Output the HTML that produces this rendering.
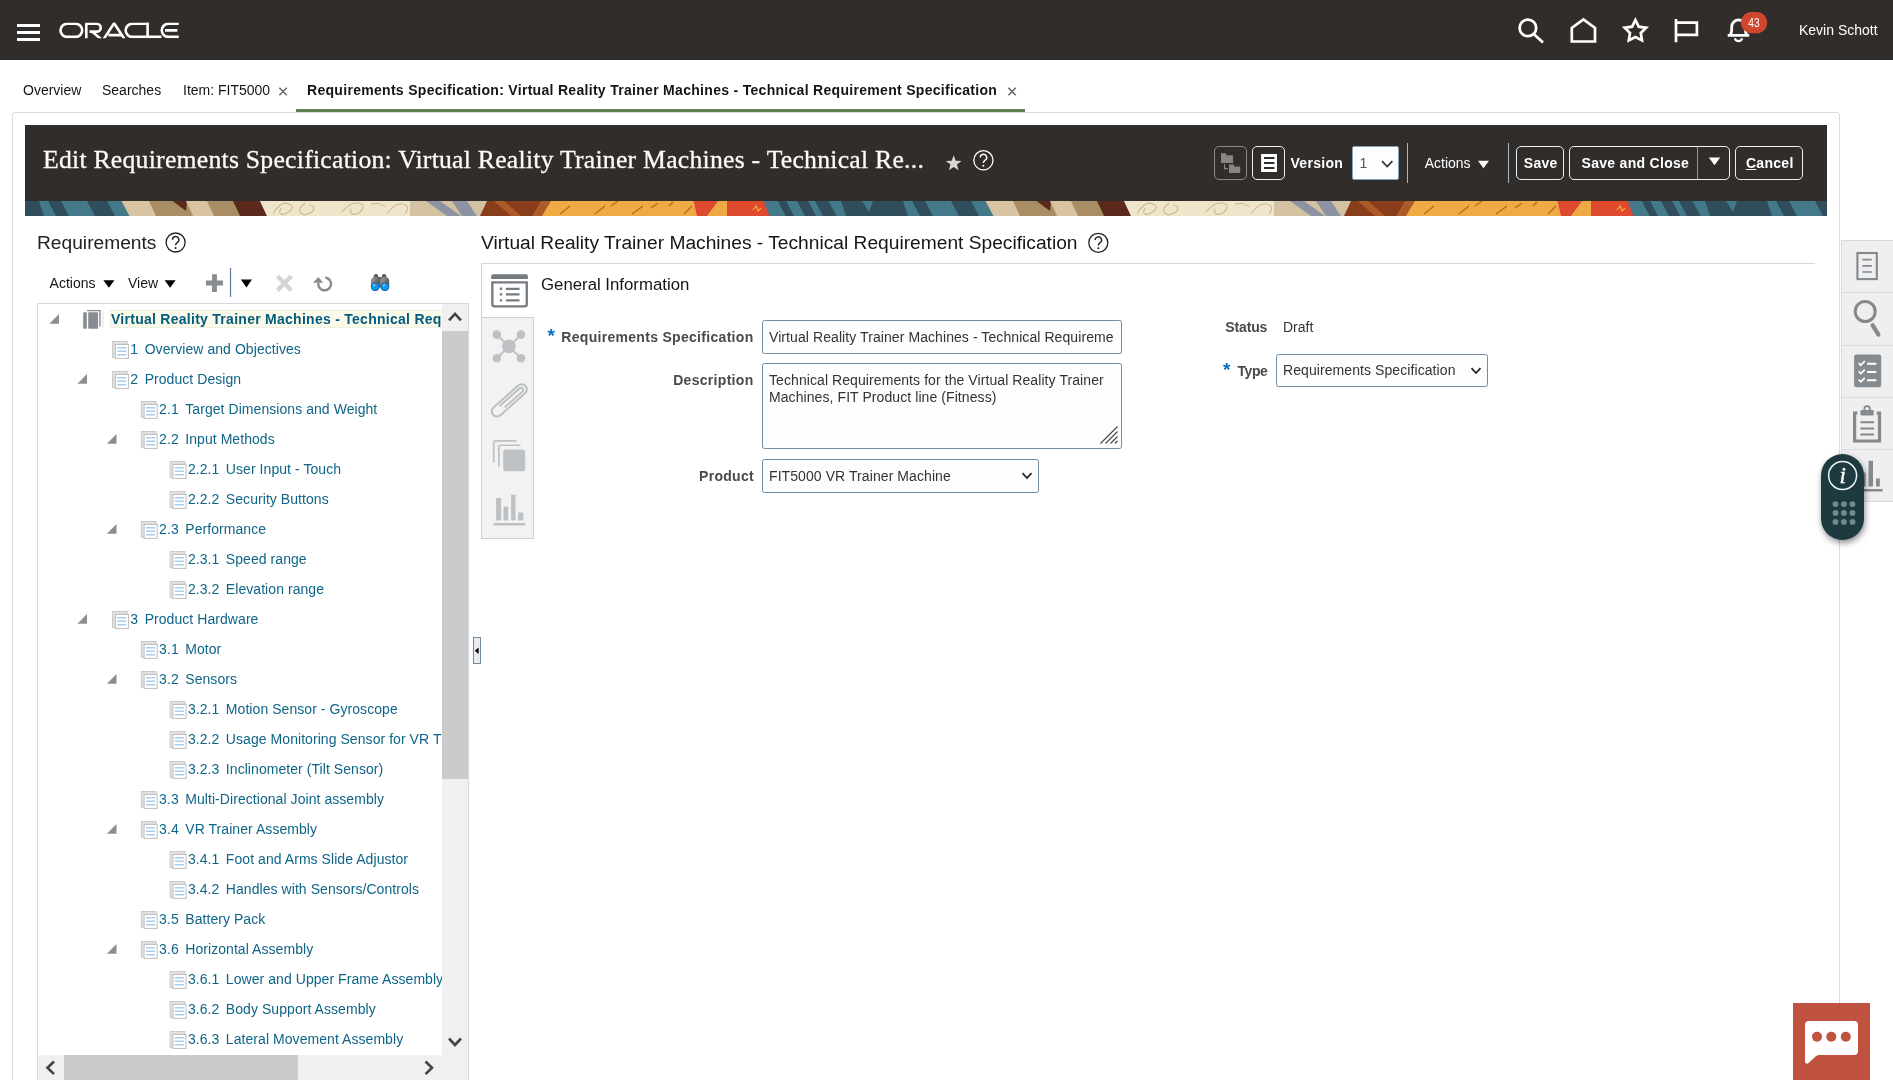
<!DOCTYPE html>
<html>
<head>
<meta charset="utf-8">
<title>Edit Requirements Specification</title>
<style>
*{box-sizing:border-box;margin:0;padding:0}
html,body{width:1893px;height:1080px;overflow:hidden;background:#fff}
body{font-family:"Liberation Sans",sans-serif;font-size:14px;color:#161513;position:relative}
.abs{position:absolute}
.t{position:absolute;white-space:pre;line-height:16px}
.b{font-weight:bold;letter-spacing:.3px}
#topbar{position:absolute;left:0;top:0;width:1893px;height:60px;background:#312d2a}
#topbar svg{position:absolute;left:0;top:0}
.tab{position:absolute;top:82px;line-height:16px;white-space:pre;color:#161513}
#panel{position:absolute;left:12px;top:112px;width:1828px;height:980px;border:1px solid #d3dde6;border-radius:3px 3px 0 0}
#hdr{position:absolute;left:25px;top:125px;width:1802px;height:76px;background:#312d2a}
#strip{position:absolute;left:25px;top:201px;width:1802px;height:15px;overflow:hidden}
#title{position:absolute;left:43px;top:144px;font-family:"Liberation Serif",serif;font-size:25.7px;letter-spacing:.25px;line-height:32px;color:#fcfbfa;white-space:pre;-webkit-text-stroke:.3px #fcfbfa;will-change:transform}
.hbtn{position:absolute;top:146px;height:34px;padding-left:1.5px;border:1px solid #f1efed;border-radius:5px;color:#fff;font-weight:bold;letter-spacing:.3px;line-height:32px;text-align:center;white-space:pre}
.tl{color:#0f6587;letter-spacing:.06px}
.tl .n{margin-right:6.5px}
.lbl{color:#4a4a4a}
.inp{border:1px solid #6f8ca8;border-radius:2.5px;background:#fcfdfe}
.ast{color:#0b6fc7;font-weight:bold;font-size:19px;line-height:19px}
.it{color:#333;letter-spacing:.08px}
#wrap{position:absolute;left:0;top:0;width:1893px;height:1080px;overflow:hidden;will-change:transform}
</style>
</head>
<body>
<div id="wrap">
<!-- TOP BAR -->
<div id="topbar">
<svg width="1893" height="60" viewBox="0 0 1893 60" fill="none" stroke="#fff">
 <g id="hamb" stroke="none" fill="#fff"><rect x="17" y="24" width="23" height="3"/><rect x="17" y="31" width="23" height="3"/><rect x="17" y="38" width="23" height="3"/></g>
 <defs><clipPath id="lc"><rect x="55" y="22.5" width="130" height="15.7"/></clipPath></defs>
 <g id="oracle" stroke-width="2.6" stroke-linejoin="miter" clip-path="url(#lc)">
  <rect x="60.5" y="23.8" width="21.7" height="13.1" rx="6.55"/>
  <path d="M86.3 39V23.8H96.8a3.9 3.9 0 0 1 0 7.8H89.5M91.6 31.2l9.6 8" stroke-linejoin="round"/>
  <path d="M103.6 39.2L114.1 23.2L124.6 39.2M108.5 35.1H121"/>
  <path d="M146.6 23.8H132.2a6.55 6.55 0 0 0 0 13.1H146.6"/>
  <path d="M147.6 22V36.9H161.4"/>
  <path d="M178.8 23.8H168.3a6.55 6.55 0 0 0 0 13.1H178.8M165 30.35H177.4"/>
 </g>
 <!-- search -->
 <g stroke-width="2.7" stroke-linecap="butt">
  <circle cx="1527.9" cy="27.9" r="8.3"/><path d="M1534.2 34.4L1543 42.6"/>
  <!-- home -->
  <path d="M1571.8 41.5V27.9L1583.4 19.4L1595 27.9V41.5Z" stroke-linejoin="miter"/>
  <!-- star -->
  <path d="M1635.4 20.0L1638.7 26.7L1646.1 27.8L1640.8 33.0L1642.0 40.4L1635.4 37.0L1628.8 40.4L1630.0 33.0L1624.7 27.8L1632.1 26.7Z" stroke-linejoin="miter"/>
  <!-- flag -->
  <path d="M1676 42.2V19M1676 22.6H1696.9V34.9H1676"/>
  <!-- bell -->
  <path d="M1727.7 35.4H1749.2M1730 35.4C1731.7 33.5 1731.7 31.5 1731.7 29.5V26.7a6.8 6.8 0 0 1 13.6 0V29.5C1745.3 31.5 1745.3 33.5 1747 35.4" stroke-width="2.8"/>
  <path d="M1734.8 38.4a3.9 3.9 0 0 0 7.4 0" stroke-width="2.2"/>
 </g>
 <rect x="1741" y="12" width="26.2" height="21.3" rx="10.65" fill="#d0472f" stroke="none"/>
 <text x="1754" y="27.4" fill="#fff" stroke="none" font-family="Liberation Sans" font-size="12" text-anchor="middle" textLength="11.4" lengthAdjust="spacingAndGlyphs">43</text>
</svg>
</div>
<div class="t" style="left:1799px;top:22px;color:#fff">Kevin Schott</div>

<!-- TABS -->
<div class="tab" style="left:23px">Overview</div>
<div class="tab" style="left:102px">Searches</div>
<div class="tab" style="left:183px">Item: FIT5000</div>
<div class="tab b" style="left:307px">Requirements Specification: Virtual Reality Trainer Machines - Technical Requirement Specification</div>
<svg class="abs" style="left:270px;top:80px" width="760" height="20" viewBox="270 80 760 20" stroke="#666" stroke-width="1.5" fill="none"><path d="M279.4 87.7l7.4 7.5M286.8 87.7l-7.4 7.5M1008.4 87.7l7.4 7.5M1015.8 87.7l-7.4 7.5"/></svg>
<div class="abs" style="left:296px;top:109px;width:729px;height:3px;background:#5f7d4f"></div>

<!-- PANEL -->
<div id="panel"></div>
<div id="hdr"></div>
<div id="strip"><svg width="1802" height="15" viewBox="0 0 1802 15" style="position:absolute;left:0;top:0"><defs><g id="tl"><g><path d="M-1 0H232V15H4.5Z" fill="#44798a"/><path d="M12.7 0H21L29 15H20.7Z" fill="#2f4d5a"/><path d="M32 0H43L51 15H40Z" fill="#2f4d5a"/><path d="M50 0H63.5L71.5 15H58Z" fill="#2f4d5a"/><path d="M76 0H138L143 15H81Z" fill="#2f4d5a"/><path d="M147 0H160L168 15H155Z" fill="#2f4d5a"/><path d="M186 0H206L214 15H194Z" fill="#2f4d5a"/><path d="M97 0h11l-4 11z" fill="#44798a"/><path d="M220.5 0H249L257 15H228.5Z" fill="#d8c4a0"/><path d="M248 0H286L293 15H255Z" fill="#a98d65"/><path d="M271.5 0H286L285 10Z" fill="#5c2a1c"/><path d="M285 0H307L314 15H292Z" fill="#d8c4a0"/><path d="M306 0H334L341 15H313Z" fill="#a98d65"/><path d="M332 0H359L366 15H339Z" fill="#5c2a1c"/><path d="M359 0H512V15H366Z" fill="#efe5cb"/><path d="M372 13q8-14 16-10t-4 10q-8 2-4-6M404 2q-8 6-4 10t12-2q3-6-4-6M440 12q10-12 18-10t0 10q-10 4-8-4M470 3q10-2 14 3M486 13q8-12 16-10t2 10" stroke="#cbb994" stroke-width="1.1" fill="none"/><path d="M509 0H590L582 15H509Z" fill="#d3c2a1"/><path d="M525 0H539L560 15H546Z" fill="#8d93a2"/><path d="M551 0H566L576 15H561Z" fill="#8d93a2"/><path d="M586 0H652L645 15H579Z" fill="#8a3d1b"/><path d="M593 0H603L620 15H610Z" fill="#ad5b29"/><path d="M640 0H652L643 15H631Z" fill="#ad5b29"/><path d="M650 0H800V15H641Z" fill="#f0aa45"/><path d="M659 13l10-8M694 13l10-8M710 5l7-5M731 13l11-8M750 7l7-5M768 5l4-4M783 13l8-8" stroke="#b9681f" stroke-width="1.3"/><path d="M792.5 0H817L806 15H796Z" fill="#df4a2e"/><path d="M817 0H826V15H806Z" fill="#f0aa45"/><path d="M826 0H863L868.5 15H826Z" fill="#df4a2e"/><path d="M852 9l3-4 2 5 3-3" stroke="#f0aa45" stroke-width="1.2" fill="none"/></g></g></defs><rect width="1802" height="15" fill="#44798a"/><use href="#tl" x="-124"/><use href="#tl" x="740"/><use href="#tl" x="1604"/></svg></div>
<div id="title">Edit Requirements Specification: Virtual Reality Trainer Machines - Technical Re...</div>


<!-- header controls -->
<svg class="abs" style="left:940px;top:140px" width="60" height="40" viewBox="940 140 60 40">
 <path d="M953.7 155.2l2 5.6 5.9.2-4.7 3.6 1.7 5.7-4.9-3.4-4.9 3.4 1.7-5.7-4.7-3.6 5.9-.2z" fill="#d9d7d5"/>
 <circle cx="983.4" cy="160.3" r="9.6" fill="none" stroke="#fff" stroke-width="1.3"/>
 <path d="M980.3 157.4a3.2 3.2 0 1 1 4.6 2.9c-1.1.7-1.5 1.3-1.5 2.6" fill="none" stroke="#fff" stroke-width="1.4"/>
 <circle cx="983.4" cy="165.8" r="1" fill="#fff"/>
</svg>
<div class="hbtn" style="left:1214px;width:33px;border-color:#8b8885"></div>
<div class="hbtn" style="left:1252px;width:33px"></div>
<svg class="abs" style="left:1214px;top:146px" width="72" height="34" viewBox="1214 146 72 34">
 <g fill="#888583"><path d="M1221 153.2h5.2v2h6.8v7.8h-12z"/><path d="M1229 164.4h5v2.2h6.2v6.4h-11.2z"/><path d="M1224 164.3h1.2v3.8h2.8v1.1h-4z"/></g>
 <path d="M1261.1 154h15.9v18.1h-15.9zM1264 157.1v1.9h10.4v-1.9zM1264 162.1v1.9h10.4v-1.9zM1264 167.1v1.9h10.4v-1.9z" fill="#fff" fill-rule="evenodd"/>
</svg>
<div class="t b" style="left:1290.5px;top:155px;color:#fff">Version</div>
<div class="abs" style="left:1352px;top:146px;width:47px;height:34px;background:#fcfdfe;border:1px solid #86a3bb;border-radius:2px"></div>
<div class="t" style="left:1359.5px;top:155px;color:#555">1</div>
<svg class="abs" style="left:1380px;top:157.5px" width="14" height="12" viewBox="0 0 14 12"><path d="M2 3.2l5.2 5.4 5.2-5.4" fill="none" stroke="#333" stroke-width="1.7"/></svg>
<div class="abs" style="left:1407px;top:143px;width:1px;height:40px;background:#a9b4bd"></div>
<div class="t" style="left:1424.7px;top:155px;color:#fff">Actions</div>
<svg class="abs" style="left:1477px;top:160px" width="13" height="9" viewBox="0 0 13 9"><path d="M1 .8h11l-5.5 7.4z" fill="#fff"/></svg>
<div class="abs" style="left:1508px;top:143px;width:1px;height:40px;background:#a9b4bd"></div>
<div class="hbtn" style="left:1516px;width:48px">Save</div>
<div class="hbtn" style="left:1569px;width:161px;text-align:left;padding-left:11.5px">Save and Close</div>
<div class="abs" style="left:1697px;top:147px;width:1px;height:32px;background:#7f9bb5"></div>
<svg class="abs" style="left:1708px;top:157px" width="13" height="9" viewBox="0 0 13 9"><path d="M.8 .6h11.4l-5.7 7.6z" fill="#fff"/></svg>
<div class="hbtn" style="left:1735px;width:68px"><span style="text-decoration:underline">C</span>ancel</div>

<!-- LEFT -->
<div id="left">
<div class="t" style="left:37px;top:231px;font-size:19.2px;line-height:24px;color:#222">Requirements</div>
<svg class="abs" style="left:164px;top:231px" width="24" height="24" viewBox="164 231 24 24"><circle cx="175.6" cy="242.5" r="9.5" fill="none" stroke="#222" stroke-width="1.3"/><path d="M172.5 239.7a3.2 3.2 0 1 1 4.6 2.9c-1.1.7-1.5 1.3-1.5 2.6" fill="none" stroke="#222" stroke-width="1.4"/><circle cx="175.6" cy="248" r="1" fill="#222"/></svg>
<div class="t" style="left:49.6px;top:275px">Actions</div>
<div class="t" style="left:128px;top:275px">View</div>
<svg class="abs" style="left:100px;top:266px" width="300" height="34" viewBox="100 266 300 34">
 <path d="M103.4 280.2h11l-5.5 7.5z" fill="#000"/>
 <path d="M164.6 280.2h11l-5.5 7.5z" fill="#000"/>
 <path d="M212.1 274.2h4.8v6.4h6.1v4.8h-6.1v6.5h-4.8v-6.5h-6.1v-4.8h6.1z" fill="#868c91"/>
 <rect x="229.9" y="268" width="1.2" height="29" fill="#5d7c9b"/>
 <path d="M240.9 279.4h11.1l-5.55 8z" fill="#000"/>
 <path d="M277.4 276l14 14.6M291.4 276l-14 14.6" stroke="#d3d5d6" stroke-width="4.4" fill="none"/>
 <path d="M325.4 277.5a6.4 6.4 0 1 1-7.1 5.4" stroke="#868c91" stroke-width="2.4" fill="none"/>
 <path d="M313 282.8l5.5-5.7 4.5 5.7z" fill="#868c91"/>
 <g id="bino">
  <defs><linearGradient id="bg" x1="0" y1="0" x2="1" y2="1"><stop offset="0" stop-color="#a9a9a9"/><stop offset=".5" stop-color="#6a6a6a"/><stop offset="1" stop-color="#3e3e3e"/></linearGradient></defs>
  <path d="M374.3 274.6q2-1 3.3 0l1.2 3.4h-5.6zM385.8 274.6q-2-1-3.3 0l-1.2 3.4h5.6z" fill="#555"/>
  <rect x="376.3" y="277.2" width="7.5" height="2.6" rx="1" fill="#4d4d4d"/>
  <rect x="379" y="279" width="2.1" height="8.5" fill="#6a6a6a"/>
  <rect x="370.9" y="276.8" width="8.6" height="14.3" rx="4.2" fill="url(#bg)"/>
  <rect x="380.6" y="276.8" width="8.6" height="14.3" rx="4.2" fill="url(#bg)"/>
  <ellipse cx="375.2" cy="286.8" rx="3.9" ry="3.8" fill="#0a9af6" stroke="#0b5fae" stroke-width=".7"/>
  <ellipse cx="384.9" cy="286.8" rx="3.9" ry="3.8" fill="#0a9af6" stroke="#0b5fae" stroke-width=".7"/>
  <ellipse cx="374.3" cy="285.3" rx=".9" ry="1.5" fill="#7fd0ff" transform="rotate(20 374.3 285.3)"/>
  <ellipse cx="384" cy="285.3" rx=".9" ry="1.5" fill="#7fd0ff" transform="rotate(20 384 285.3)"/>
 </g>
</svg>

<div class="abs" id="tree" style="left:37px;top:303px;width:432px;height:790px;border:1px solid #cfdae4;border-bottom:none;background:#fff;overflow:hidden">
<div class="abs" style="left:0;top:0;width:404px;height:751px;overflow:hidden">
<svg class="abs" style="left:0;top:0" width="404" height="751" viewBox="0 0 404 751"><defs><g id="doc"><rect x="112.5" y="341.5" width="14.8" height="15.8" fill="#e2e2e2" stroke="#c6c6c6" stroke-width=".9"/><rect x="115.3" y="344.4" width="13.1" height="14" fill="#fff" stroke="#bcbcbc" stroke-width="1"/><path d="M117.2 347.7h9.1M117.2 351.3h9.1M117.2 354.8h9.1" stroke="#a8cdef" stroke-width="1.6"/></g></defs><path d="M21 10v9.7h-9.6z" fill="#8b8e91"/><g fill="#868c91"><rect x="45.2" y="8.3" width="3.6" height="16.4" rx=".8"/><rect x="50.2" y="8.3" width="9.9" height="16.4" rx=".8"/><path d="M49.1 6h13.6v16.5h-1.4v-15.3h-12.2z"/><rect x="64.2" y="6.4" width="1.5" height="17.2" fill="#ececec"/></g><g transform="translate(-38 -304)"><use href="#doc"/></g><path d="M49 70v9.7h-9.6z" fill="#8b8e91"/><g transform="translate(-38 -274)"><use href="#doc"/></g><g transform="translate(-9.2 -244)"><use href="#doc"/></g><path d="M78.5 130v9.7h-9.6z" fill="#8b8e91"/><g transform="translate(-9.2 -214)"><use href="#doc"/></g><g transform="translate(19.6 -184)"><use href="#doc"/></g><g transform="translate(19.6 -154)"><use href="#doc"/></g><path d="M78.5 220v9.7h-9.6z" fill="#8b8e91"/><g transform="translate(-9.2 -124)"><use href="#doc"/></g><g transform="translate(19.6 -94)"><use href="#doc"/></g><g transform="translate(19.6 -64)"><use href="#doc"/></g><path d="M49 310v9.7h-9.6z" fill="#8b8e91"/><g transform="translate(-38 -34)"><use href="#doc"/></g><g transform="translate(-9.2 -4)"><use href="#doc"/></g><path d="M78.5 370v9.7h-9.6z" fill="#8b8e91"/><g transform="translate(-9.2 26)"><use href="#doc"/></g><g transform="translate(19.6 56)"><use href="#doc"/></g><g transform="translate(19.6 86)"><use href="#doc"/></g><g transform="translate(19.6 116)"><use href="#doc"/></g><g transform="translate(-9.2 146)"><use href="#doc"/></g><path d="M78.5 520v9.7h-9.6z" fill="#8b8e91"/><g transform="translate(-9.2 176)"><use href="#doc"/></g><g transform="translate(19.6 206)"><use href="#doc"/></g><g transform="translate(19.6 236)"><use href="#doc"/></g><g transform="translate(-9.2 266)"><use href="#doc"/></g><path d="M78.5 640v9.7h-9.6z" fill="#8b8e91"/><g transform="translate(-9.2 296)"><use href="#doc"/></g><g transform="translate(19.6 326)"><use href="#doc"/></g><g transform="translate(19.6 356)"><use href="#doc"/></g><g transform="translate(19.6 386)"><use href="#doc"/></g></svg>
<div class="abs" style="left:72.2px;top:6.2px;width:340px;height:17.6px;background:#fafaea;border:1px solid #f0f0e2"></div><div class="t b" style="left:73px;top:7px;color:#045b7e;letter-spacing:.27px">Virtual Reality Trainer Machines - Technical Requirement Specification</div><div class="t tl" style="left:92.3px;top:37px"><span class="n">1</span>Overview and Objectives</div><div class="t tl" style="left:92.3px;top:67px"><span class="n">2</span>Product Design</div><div class="t tl" style="left:121.1px;top:97px"><span class="n">2.1</span>Target Dimensions and Weight</div><div class="t tl" style="left:121.1px;top:127px"><span class="n">2.2</span>Input Methods</div><div class="t tl" style="left:149.9px;top:157px"><span class="n">2.2.1</span>User Input - Touch</div><div class="t tl" style="left:149.9px;top:187px"><span class="n">2.2.2</span>Security Buttons</div><div class="t tl" style="left:121.1px;top:217px"><span class="n">2.3</span>Performance</div><div class="t tl" style="left:149.9px;top:247px"><span class="n">2.3.1</span>Speed range</div><div class="t tl" style="left:149.9px;top:277px"><span class="n">2.3.2</span>Elevation range</div><div class="t tl" style="left:92.3px;top:307px"><span class="n">3</span>Product Hardware</div><div class="t tl" style="left:121.1px;top:337px"><span class="n">3.1</span>Motor</div><div class="t tl" style="left:121.1px;top:367px"><span class="n">3.2</span>Sensors</div><div class="t tl" style="left:149.9px;top:397px"><span class="n">3.2.1</span>Motion Sensor - Gyroscope</div><div class="t tl" style="left:149.9px;top:427px"><span class="n">3.2.2</span>Usage Monitoring Sensor for VR Trainer</div><div class="t tl" style="left:149.9px;top:457px"><span class="n">3.2.3</span>Inclinometer (Tilt Sensor)</div><div class="t tl" style="left:121.1px;top:487px"><span class="n">3.3</span>Multi-Directional Joint assembly</div><div class="t tl" style="left:121.1px;top:517px"><span class="n">3.4</span>VR Trainer Assembly</div><div class="t tl" style="left:149.9px;top:547px"><span class="n">3.4.1</span>Foot and Arms Slide Adjustor</div><div class="t tl" style="left:149.9px;top:577px"><span class="n">3.4.2</span>Handles with Sensors/Controls</div><div class="t tl" style="left:121.1px;top:607px"><span class="n">3.5</span>Battery Pack</div><div class="t tl" style="left:121.1px;top:637px"><span class="n">3.6</span>Horizontal Assembly</div><div class="t tl" style="left:149.9px;top:667px"><span class="n">3.6.1</span>Lower and Upper Frame Assembly</div><div class="t tl" style="left:149.9px;top:697px"><span class="n">3.6.2</span>Body Support Assembly</div><div class="t tl" style="left:149.9px;top:727px"><span class="n">3.6.3</span>Lateral Movement Assembly</div>
</div>
<div class="abs" style="left:404px;top:0;width:26px;height:751px;background:#f0f0f0"></div>
<div class="abs" style="left:404px;top:27px;width:26px;height:448px;background:#cbcbcb"></div>
<div class="abs" style="left:0;top:751px;width:430px;height:40px;background:#f0f0f0"></div>
<div class="abs" style="left:26px;top:751px;width:234px;height:40px;background:#cbcbcb"></div>
<svg class="abs" style="left:0;top:0" width="430" height="790" viewBox="38 304 430 790" fill="none" stroke="#444" stroke-width="2.6">
<path d="M449 320.3l6-6.5 6 6.5"/><path d="M449 1038.5l6 6.5 6-6.5"/><path d="M54 1061.5l-6.5 6.3 6.5 6.3"/><path d="M425.5 1061.5l6.5 6.3-6.5 6.3"/></svg>

</div>
<div class="abs" style="left:473px;top:637px;width:8px;height:27px;border:1px solid #7188a0;background:#ebedf0"></div>
<svg class="abs" style="left:473px;top:637px" width="8" height="28" viewBox="0 0 8 28"><path d="M1.8 13.8l3.8-3.3v6.6z" fill="#000"/></svg>

</div><!--/left-->
<!-- RIGHT -->
<div id="right">
<div class="t" style="left:481px;top:231px;font-size:19.2px;line-height:24px;color:#161513">Virtual Reality Trainer Machines - Technical Requirement Specification</div>
<svg class="abs" style="left:1086px;top:231px" width="24" height="24" viewBox="1086 231 24 24"><circle cx="1098.3" cy="242.8" r="9.5" fill="none" stroke="#222" stroke-width="1.3"/><path d="M1095.2 240a3.2 3.2 0 1 1 4.6 2.9c-1.1.7-1.5 1.3-1.5 2.6" fill="none" stroke="#222" stroke-width="1.4"/><circle cx="1098.3" cy="248.3" r="1" fill="#222"/></svg>
<div class="abs" style="left:481px;top:263px;width:1334px;height:1px;background:#d5d9dc"></div>
<!-- vertical tabs -->
<div class="abs" style="left:481px;top:264px;width:52.5px;height:275px;background:#f2f2f2;border:1px solid #cfcfcf;border-top:none"></div>
<div class="abs" style="left:482px;top:264px;width:52px;height:54px;background:#fff;border-bottom:1px solid #cfcfcf"></div>
<svg class="abs" style="left:482px;top:264px" width="51" height="274" viewBox="482 264 51 274">
 <g fill="#757b80">
  <path d="M493.2 274.3h32.7a2 2 0 0 1 2 2v2.6h-36.7v-2.6a2 2 0 0 1 2-2z"/>
  <path d="M491.2 281.2h36.7v23.4a3 3 0 0 1-3 3h-30.7a3 3 0 0 1-3-3zM493.5 283.5v20.8a1 1 0 0 0 1 1h30.1a1 1 0 0 0 1-1v-20.8z" fill-rule="evenodd"/>
  <path d="M499.8 287.6h2.4v2.4h-2.4zM499.8 293.2h2.4v2.4h-2.4zM499.8 299.2h2.4v2.4h-2.4zM505.9 287.7h13.6v2.2h-13.6zM505.9 293.3h13.6v2.2h-13.6zM505.9 299.3h13.6v2.2h-13.6z"/>
 </g>
 <g fill="#bdc1c4" stroke="#bdc1c4" stroke-width="2">
  <path d="M496.8 334.6L521 358.3M521 334.6L496.8 358.3"/>
  <g stroke="none"><circle cx="508.9" cy="346.4" r="6.8"/><circle cx="496.8" cy="334.6" r="4.3"/><circle cx="521" cy="334.6" r="4.3"/><circle cx="496.8" cy="358.3" r="4.3"/><circle cx="521" cy="358.3" r="4.3"/></g>
 </g>
 <g transform="translate(509.3 400.4) rotate(-41.5)" fill="none" stroke="#bdc1c4" stroke-width="2">
  <path d="M-16.5 -5.2H16.5a5.2 5.2 0 0 1 0 10.4H-16.5a5.2 5.2 0 0 1 0-10.4z"/>
  <path d="M-8 2.2H15.5a2.2 2.2 0 0 0 0-4.4H-11"/>
 </g>
 <g fill="#bdc1c4">
  <rect x="503.2" y="449.5" width="22" height="21.7" rx="2.8"/>
  <path d="M498 466.5v-19.5a2.6 2.6 0 0 1 2.6-2.6h19.9v1.7h-19.4a1.4 1.4 0 0 0-1.4 1.4v19z"/>
  <path d="M492.9 462.6v-20a2.6 2.6 0 0 1 2.6-2.6h21.1v1.7h-20.6a1.4 1.4 0 0 0-1.4 1.4v19.5z"/>
  <path d="M496.1 498h5v22.5h-5zM503.5 506.6h4.7v13.9h-4.7zM511.1 494.8h4.4v25.7h-4.4zM518.2 512.5h5v8h-5zM493.7 522.9h31.5v2.6h-31.5z"/>
 </g>
</svg>
<div class="t" style="left:541px;top:275px;font-size:16.8px;line-height:20px;color:#161513">General Information</div>
<!-- form -->
<div class="t ast" style="left:547.5px;top:325.5px">*</div>
<div class="t b lbl" style="right:1139.5px;top:329px">Requirements Specification</div>
<div class="abs inp" style="left:762px;top:320px;width:360px;height:33.5px"></div>
<div class="t it" style="left:769px;top:329px">Virtual Reality Trainer Machines - Technical Requireme</div>
<div class="t b lbl" style="right:1139.5px;top:372px">Description</div>
<div class="abs inp" style="left:762px;top:363px;width:360px;height:85.5px"></div>
<div class="t it" style="left:769px;top:372px;line-height:17px">Technical Requirements for the Virtual Reality Trainer
Machines, FIT Product line (Fitness)</div>
<svg class="abs" style="left:1098px;top:424px" width="22" height="22" viewBox="0 0 22 22" stroke="#444" stroke-width="1.1"><path d="M2.5 19.5L19.5 2.5M7.5 19.5L19.5 7.5M12.5 19.5L19.5 12.5M17 19.5L19.5 17"/></svg>
<div class="t b lbl" style="right:1139px;top:468px">Product</div>
<div class="abs inp" style="left:762px;top:459px;width:277px;height:34px"></div>
<div class="t it" style="left:769px;top:468px">FIT5000 VR Trainer Machine</div>
<svg class="abs" style="left:1020px;top:470px" width="14" height="12" viewBox="0 0 14 12"><path d="M2.5 3.2l4.5 4.8 4.5-4.8" fill="none" stroke="#222" stroke-width="1.7"/></svg>
<!-- right column -->
<div class="t b lbl" style="left:1225.3px;top:319px;letter-spacing:-.15px">Status</div>
<div class="t" style="left:1283px;top:319px;color:#333">Draft</div>
<div class="t ast" style="left:1223px;top:359.5px">*</div>
<div class="t b lbl" style="left:1237.5px;top:362.5px;letter-spacing:-.45px">Type</div>
<div class="abs inp" style="left:1276px;top:354px;width:212px;height:33px"></div>
<div class="t it" style="left:1283px;top:362px">Requirements Specification</div>
<svg class="abs" style="left:1469px;top:364.5px" width="14" height="12" viewBox="0 0 14 12"><path d="M2.5 3.2l4.5 4.8 4.5-4.8" fill="none" stroke="#222" stroke-width="1.7"/></svg>
<!-- right sidebar -->
<div class="abs" style="left:1840.5px;top:240px;width:60px;height:261.5px;background:#efefef;border:1px solid #d3dce4"></div>
<div class="abs" style="left:1842px;top:292.3px;width:60px;height:1px;background:#d3dce4"></div>
<div class="abs" style="left:1842px;top:344.8px;width:60px;height:1px;background:#d3dce4"></div>
<div class="abs" style="left:1842px;top:396.8px;width:60px;height:1px;background:#d3dce4"></div>
<div class="abs" style="left:1842px;top:449.2px;width:60px;height:1px;background:#d3dce4"></div>
<svg class="abs" style="left:1842px;top:241px" width="51" height="262" viewBox="1842 241 51 262">
 <g fill="none" stroke="#84898e">
  <rect x="1857.4" y="253" width="19.4" height="26.1" stroke-width="2.1"/>
  <path d="M1862.4 259.7h9.4M1862.4 265.9h9.4M1862.4 272h9.4" stroke-width="1.7"/>
  <circle cx="1865.2" cy="311.5" r="10" stroke-width="3"/>
  <path d="M1872.6 325.2L1878.4 334.6" stroke-width="4.2" stroke-linecap="round"/>
  <path d="M1857.4 413.1h-2.8v27.9h24.9v-27.9h-2.8" stroke-width="3.2"/>
  <circle cx="1867.1" cy="408.9" r="2.8" stroke-width="1.8"/>
  <path d="M1860.4 422.3h13.6M1860.4 428.5h13.6M1860.4 434.5h13.6" stroke-width="2"/>
 </g>
 <g fill="#868b90">
  <rect x="1854.1" y="354.4" width="27.1" height="32.9" rx="2.2"/>
  <rect x="1860.4" y="410" width="13.3" height="5.5" rx="1"/>
  <path d="M1861 472.5h4.6v14h-4.6zM1868.5 460.8h4.5v25.7h-4.5zM1876 478.6h3.8v7.9h-3.8zM1852 489h30.6v2.5h-30.6z"/>
 </g>
 <g fill="none" stroke="#fff" stroke-width="1.7">
  <path d="M1858.6 363l2.2 2.2 4-4M1858.6 371.4l2.2 2.2 4-4M1858.6 379.7l2.2 2.2 4-4"/>
  <path d="M1867.1 363.7h9.2M1867.1 372h9.2M1867.1 380.3h9.2" stroke-width="2"/>
 </g>
</svg>
<!-- pill -->
<div class="abs" style="left:1821px;top:454px;width:43px;height:86px;border-radius:21.5px;background:#1c3a40;box-shadow:1px 3px 6px rgba(0,0,0,.45)"></div>
<svg class="abs" style="left:1821px;top:454px" width="43" height="86" viewBox="1821 454 43 86">
 <circle cx="1842.6" cy="475.5" r="14" fill="none" stroke="#eef3f3" stroke-width="1.5"/>
 <text x="1842.6" y="483" font-family="Liberation Serif" font-style="italic" font-size="23" fill="#fff" stroke="#fff" stroke-width=".4" text-anchor="middle">i</text>
 <g fill="#6e8b8d"><circle cx="1835.5" cy="504.1" r="2.9"/><circle cx="1843.9" cy="504.1" r="2.9"/><circle cx="1852.5" cy="504.1" r="2.9"/><circle cx="1835.5" cy="512.9" r="2.9"/><circle cx="1843.9" cy="512.9" r="2.9"/><circle cx="1852.5" cy="512.9" r="2.9"/><circle cx="1835.5" cy="521.9" r="2.9"/><circle cx="1843.9" cy="521.9" r="2.9"/><circle cx="1852.5" cy="521.9" r="2.9"/></g>
</svg>
<!-- chat -->
<div class="abs" style="left:1793px;top:1003px;width:77px;height:80px;background:#c0533f"></div>
<svg class="abs" style="left:1793px;top:1003px" width="77" height="77" viewBox="1793 1003 77 77">
 <path d="M1809 1021h45a4 4 0 0 1 4 4v26a4 4 0 0 1-4 4h-35q-2 0-3.5 1.5l-7 6.5q-1.5 1.5-3 0q-.5-.5-.5-2v-36a4 4 0 0 1 4-4z" fill="#fff"/>
 <g fill="#c0533f"><circle cx="1817" cy="1036.7" r="5"/><circle cx="1831.3" cy="1036.7" r="5"/><circle cx="1845.8" cy="1036.7" r="5"/></g>
</svg>

</div><!--/right-->
</div>
</body>
</html>
